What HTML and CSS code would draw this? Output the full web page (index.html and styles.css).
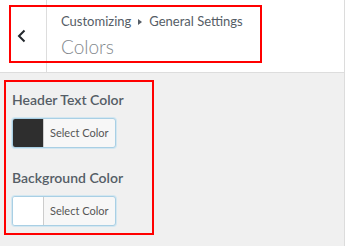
FILE: index.html
```html
<!DOCTYPE html>
<html lang="en">
<head>
<meta charset="UTF-8">
<meta name="viewport" content="width=device-width, initial-scale=1.0">
<title>Colors</title>
<link rel="stylesheet" href="styles.css">
</head>
<body>

<div class="panel">
    <div class="section-head">
        <button class="back" aria-label="Back">
            <svg width="10" height="14" viewBox="0 0 10 14">
                <polyline points="7.5,1.5 2,7 7.5,12.5" fill="none" stroke="#23282d" stroke-width="2"/>
            </svg>
        </button>
        <div class="title">
            <span class="crumb">Customizing<span class="sep"></span>General Settings</span>
            <h3>Colors</h3>
        </div>
        <div class="mark mark-head"></div>
    </div>

    <ul class="controls">
        <li class="control">
            <span class="control-title">Header Text Color</span>
            <button class="color-btn">
                <span class="swatch swatch-dark"></span>
                <span class="btn-text">Select Color</span>
            </button>
        </li>
        <li class="control">
            <span class="control-title">Background Color</span>
            <button class="color-btn">
                <span class="swatch swatch-white"></span>
                <span class="btn-text">Select Color</span>
            </button>
        </li>
    </ul>
</div>

</body>
</html>
```

FILE: styles.css
```css
body {
    margin: 0;
    font-family: Lato, "Open Sans", sans-serif;
    background-color: #f0f0f0;
    color: #555d66;
}
.panel {
    width: 344px;
    height: 246px;
    border-right: 1px solid #dcdcdc;
}
.section-head {
    display: flex;
    height: 72px;
    background-color: #fff;
    border-bottom: 1px solid #ddd;
    position: relative;
}
.back {
    width: 47px;
    padding: 0;
    border: none;
    border-right: 1px solid #ddd;
    background: none;
    display: flex;
    align-items: center;
    justify-content: center;
}
.back svg {
    margin-right: 2px;
}
.title {
    padding: 11px 0 0 14px;
}
.crumb {
    display: flex;
    align-items: center;
    font-size: 13px;
    line-height: 20px;
}
.sep {
    width: 0;
    height: 0;
    border-left: 4px solid #555d66;
    border-top: 3px solid transparent;
    border-bottom: 3px solid transparent;
    margin: 1px 7px 0 7px;
}
.title h3 {
    margin: 3px 0 0;
    font-size: 19px;
    font-weight: 300;
    line-height: 26px;
    color: #82878c;
}
/* red annotation boxes */
.mark {
    position: absolute;
    border: 2px solid #f00;
    pointer-events: none;
}
.mark-head {
    left: 9px;
    top: 5px;
    width: 249px;
    height: 54px;
}
.controls {
    list-style: none;
    box-sizing: border-box;
    width: 150px;
    height: 155px;
    margin: 7px 0 0 4px;
    padding: 6px 0 0 6px;
    border: 2px solid #f00;
}
.control {
    margin-bottom: 18px;
}
.control-title {
    display: block;
    font-size: 14px;
    font-weight: 600;
    line-height: 24px;
    margin-bottom: 6px;
}
.color-btn {
    display: flex;
    box-sizing: border-box;
    width: 104px;
    height: 30px;
    padding: 0;
    border: 1px solid #a9cfe4;
    box-shadow: 0 0 0 1px #d3e7f1;
    border-radius: 3px;
    background-color: #f7f7f7;
    overflow: hidden;
    font-family: inherit;
    cursor: pointer;
}
.swatch {
    width: 30px;
    height: 100%;
    border-right: 1px solid #ccc;
}
.swatch-dark {
    background-color: #2e2e2e;
}
.swatch-white {
    background-color: #fff;
}
.btn-text {
    padding-left: 6px;
    font-size: 11px;
    line-height: 28px;
    color: #555;
}
```
